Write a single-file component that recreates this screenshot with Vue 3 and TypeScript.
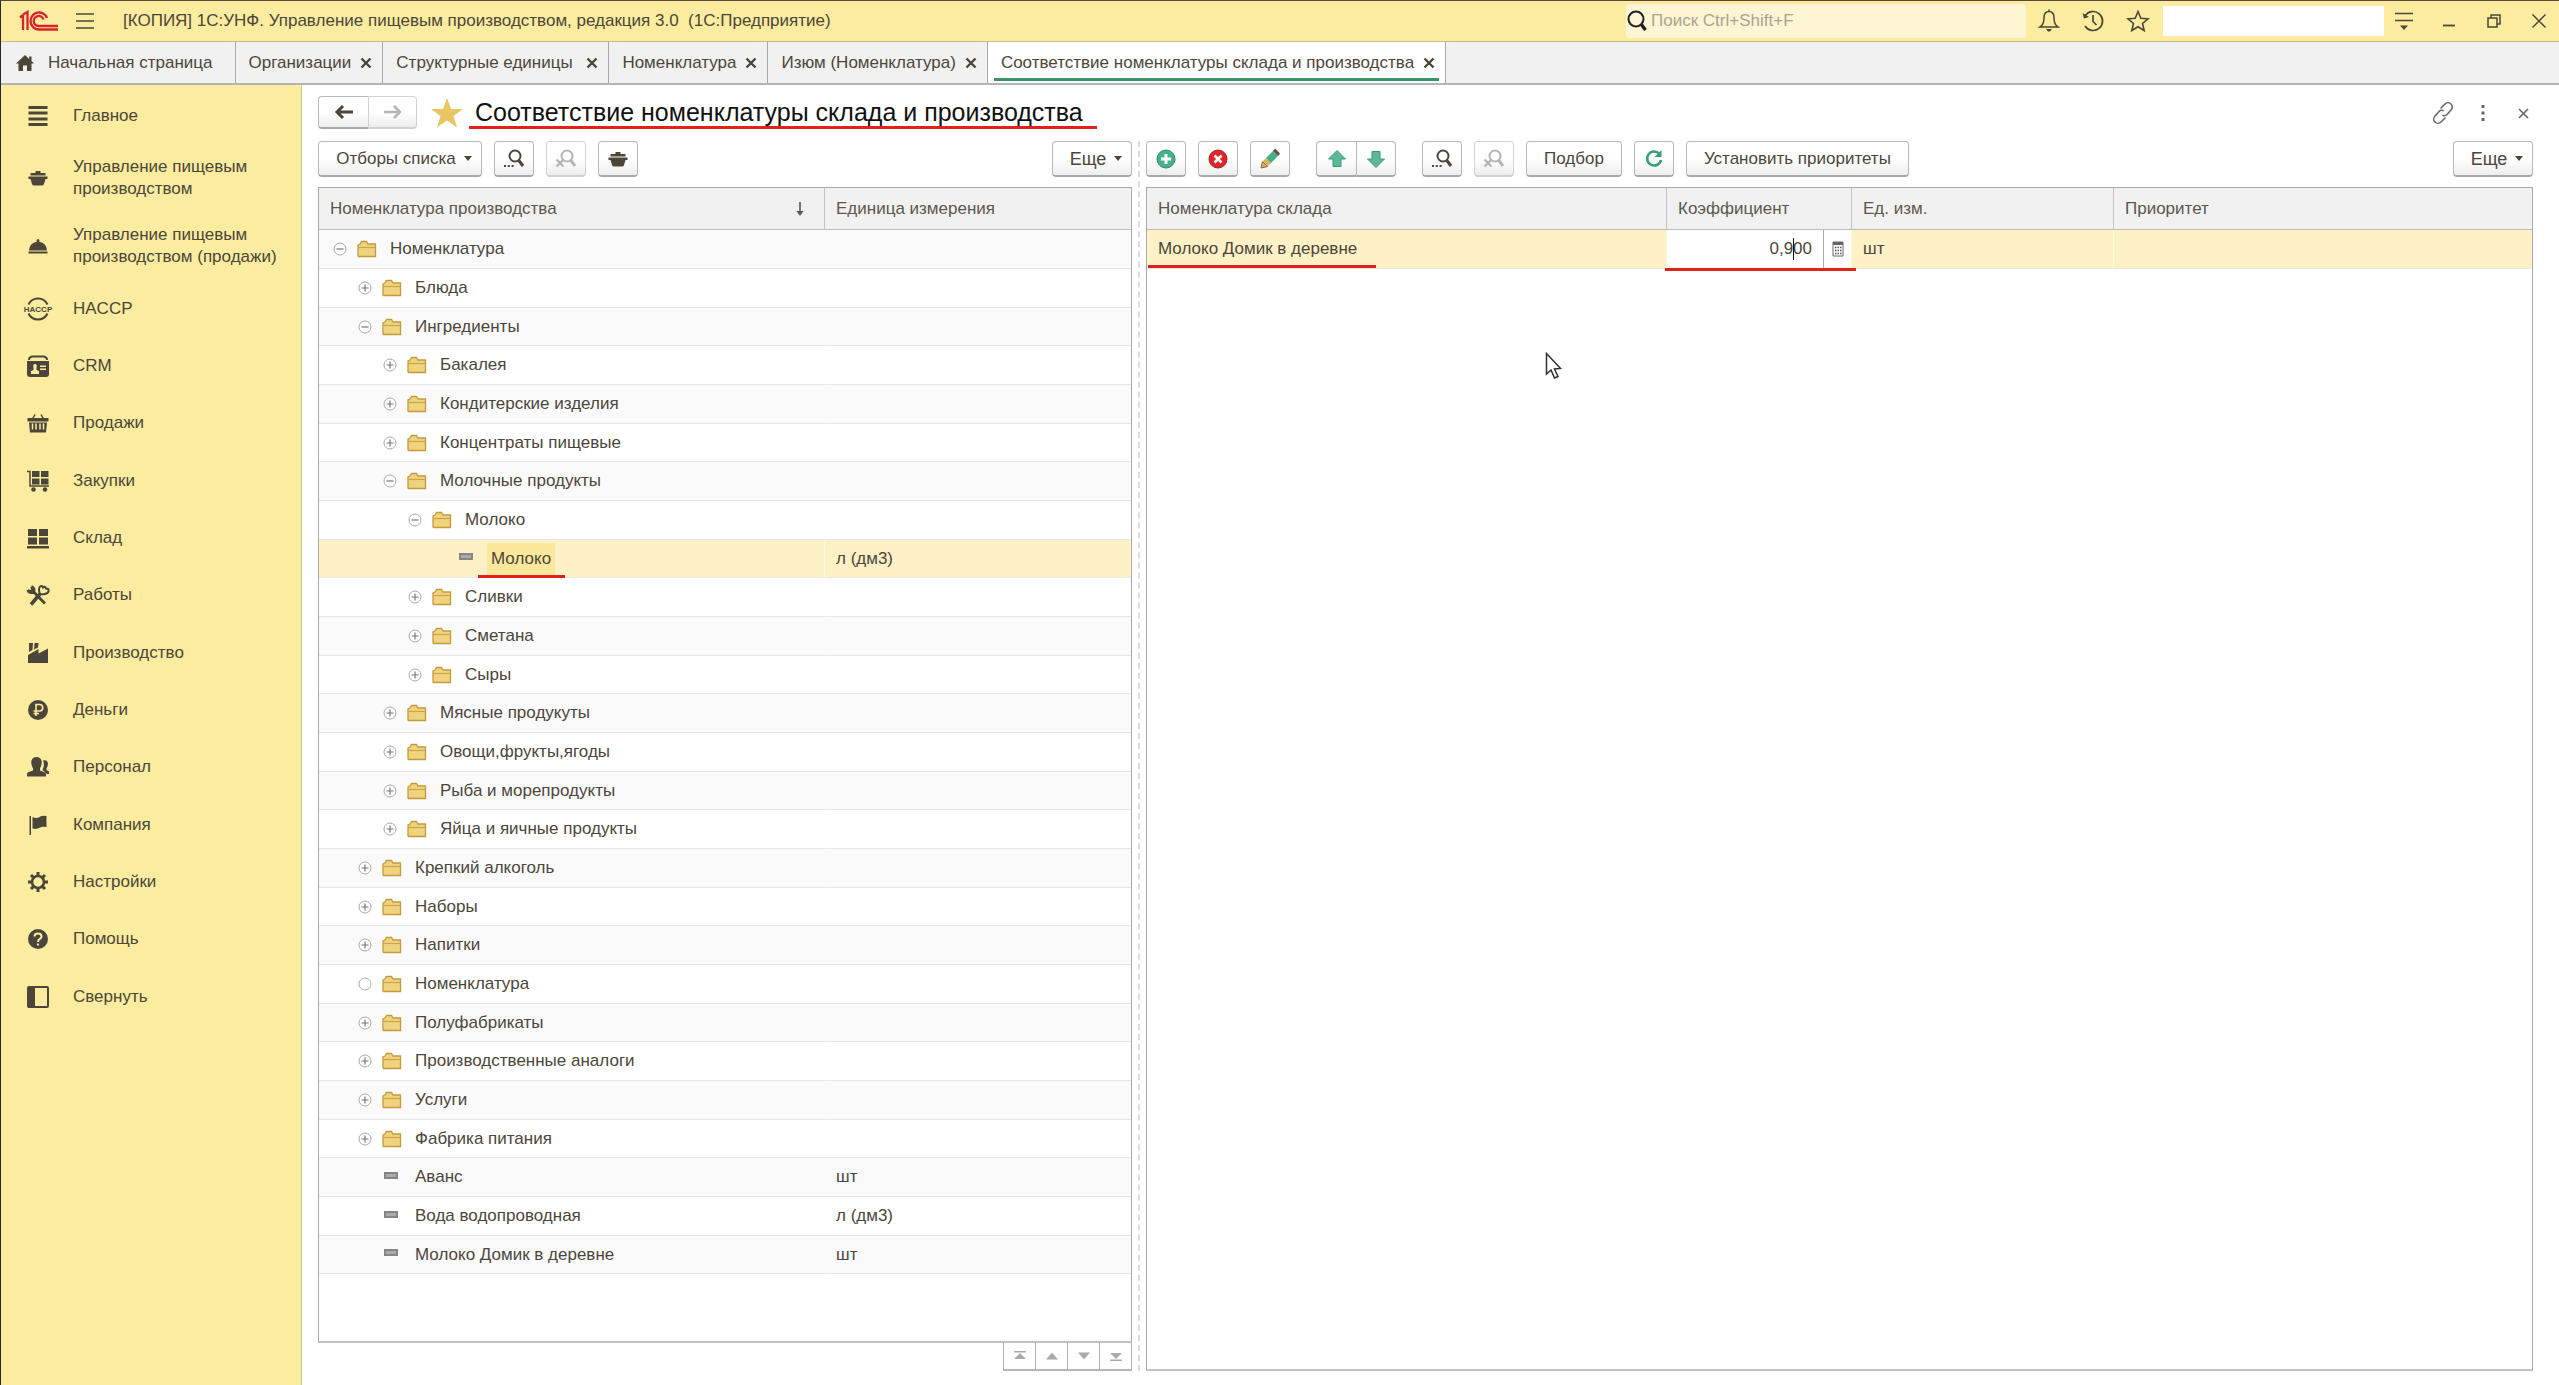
<script setup lang="ts">
import { ref } from 'vue'

interface Tab { title: string; closable: boolean; active?: boolean; home?: boolean }
interface NavItem { icon: string; label: string }
interface TreeRow { name: string; level: number; state: 'open' | 'closed' | 'empty' | 'leaf'; unit?: string; selected?: boolean }

const tabs: Tab[] = [
  { title: 'Начальная страница', closable: false, home: true },
  { title: 'Организации', closable: true },
  { title: 'Структурные единицы\u00a0', closable: true },
  { title: 'Номенклатура', closable: true },
  { title: 'Изюм (Номенклатура)', closable: true },
  { title: 'Соответствие номенклатуры склада и производства', closable: true, active: true },
]

const nav: NavItem[] = [
  { icon: 'main', label: 'Главное' },
  { icon: 'pot', label: 'Управление пищевым производством' },
  { icon: 'cloche', label: 'Управление пищевым производством (продажи)' },
  { icon: 'haccp', label: 'HACCP' },
  { icon: 'crm', label: 'CRM' },
  { icon: 'basket', label: 'Продажи' },
  { icon: 'cart', label: 'Закупки' },
  { icon: 'stock', label: 'Склад' },
  { icon: 'tools', label: 'Работы' },
  { icon: 'factory', label: 'Производство' },
  { icon: 'money', label: 'Деньги' },
  { icon: 'people', label: 'Персонал' },
  { icon: 'flag', label: 'Компания' },
  { icon: 'gear', label: 'Настройки' },
  { icon: 'help', label: 'Помощь' },
  { icon: 'collapse', label: 'Свернуть' },
]

const tree: TreeRow[] = [
  { name: 'Номенклатура', level: 0, state: 'open' },
  { name: 'Блюда', level: 1, state: 'closed' },
  { name: 'Ингредиенты', level: 1, state: 'open' },
  { name: 'Бакалея', level: 2, state: 'closed' },
  { name: 'Кондитерские изделия', level: 2, state: 'closed' },
  { name: 'Концентраты пищевые', level: 2, state: 'closed' },
  { name: 'Молочные продукты', level: 2, state: 'open' },
  { name: 'Молоко', level: 3, state: 'open' },
  { name: 'Молоко', level: 4, state: 'leaf', unit: 'л (дм3)', selected: true },
  { name: 'Сливки', level: 3, state: 'closed' },
  { name: 'Сметана', level: 3, state: 'closed' },
  { name: 'Сыры', level: 3, state: 'closed' },
  { name: 'Мясные продукуты', level: 2, state: 'closed' },
  { name: 'Овощи,фрукты,ягоды', level: 2, state: 'closed' },
  { name: 'Рыба и морепродукты', level: 2, state: 'closed' },
  { name: 'Яйца и яичные продукты', level: 2, state: 'closed' },
  { name: 'Крепкий алкоголь', level: 1, state: 'closed' },
  { name: 'Наборы', level: 1, state: 'closed' },
  { name: 'Напитки', level: 1, state: 'closed' },
  { name: 'Номенклатура', level: 1, state: 'empty' },
  { name: 'Полуфабрикаты', level: 1, state: 'closed' },
  { name: 'Производственные аналоги', level: 1, state: 'closed' },
  { name: 'Услуги', level: 1, state: 'closed' },
  { name: 'Фабрика питания', level: 1, state: 'closed' },
  { name: 'Аванс', level: 1, state: 'leaf', unit: 'шт' },
  { name: 'Вода водопроводная', level: 1, state: 'leaf', unit: 'л (дм3)' },
  { name: 'Молоко Домик в деревне', level: 1, state: 'leaf', unit: 'шт' },
]

const search = ref('')
const coefficient = ref('0,900')
</script>

<template>
  <svg class="sprite" aria-hidden="true">
    <symbol id="i-main" viewBox="0 0 24 24"><path d="M2.500 3.500h19M2.500 9h19M2.500 15h19M2.500 20.500h19" stroke="currentColor" stroke-width="3" fill="none" /></symbol>
    <symbol id="i-pot" viewBox="0 0 24 24"><path d="M9.500 5h5v2h5v2.500h-15V7h5zM2.500 10.500h19v2.500h-2l-1.500 5q-.5 1.500-2 1.500H8q-1.500 0-2-1.500L4.500 13h-2z" fill="currentColor" /></symbol>
    <symbol id="i-cloche" viewBox="0 0 24 24"><path d="M10.500 6.500a1.500 1.500 0 0 1 3 0l-.3 1.300Q20.500 9 21 16.500H3Q3.500 9 10.800 7.800zM2.500 17.500h19v2h-19z" fill="currentColor" /></symbol>
    <symbol id="i-crm" viewBox="0 0 24 24">
      <path d="M3 6q0-3.500 4-3.500h10Q21 2.500 21 6" stroke="currentColor" stroke-width="2" fill="none" />
      <path d="M1 7h22v13q0 3-3 3H4q-3 0-3-3z" fill="currentColor" />
      <path d="M5 20v-3l2.500-1V14Q6.500 10 9 10t1.500 4v2l2.500 1v3zM14 11.500h6v1.500h-6zM14 14.500h6V16h-6z" fill="#fbec9f" />
    </symbol>
    <symbol id="i-basket" viewBox="0 0 24 24">
      <path d="M6 9 9 3.500M18 9l-3-5.500" stroke="currentColor" stroke-width="1.500" />
      <path d="M1.500 7h21v3.500h-21zM3 11.500h18L20 21.500H4z" fill="currentColor" />
      <path d="M6.500 12.500v6M10 12.500v6M14 12.500v6M17.500 12.500v6" stroke="#fbec9f" stroke-width="1.500" />
    </symbol>
    <symbol id="i-cart" viewBox="0 0 24 24">
      <path d="M1 2.500h3V17h19" stroke="currentColor" stroke-width="1.500" fill="none" />
      <path d="M6 2h7.500v6H6zM15 2h7.500v6H15zM6 9.500h7.500v6H6zM15 9.500h7.500v6H15z" fill="currentColor" />
      <circle cx="7.500" cy="20.500" r="2.300" fill="currentColor" /><circle cx="19" cy="20.500" r="2.300" fill="currentColor" />
    </symbol>
    <symbol id="i-stock" viewBox="0 0 24 24"><path d="M2 3h9v7H2zM13 3h9v7h-9zM2 11.500h9v7H2zM13 11.500h9v7h-9zM1 20h22v2.500H1z" fill="currentColor" /></symbol>
    <symbol id="i-tools" viewBox="0 0 24 24">
      <path d="M5.500 3.500 7 6.500 5 8.500 1.800 7.500M1.800 7a4 4 0 0 0 6 2L19 20.500M7.800 9A4 4 0 0 0 5.500 3.500" stroke="currentColor" stroke-width="2.800" fill="none" />
      <path d="M5 21.500 14 11" stroke="currentColor" stroke-width="3.500" />
      <path d="M14 11q-2-5 0-7.500 2-1.500 3 1 2-2 3 1 3.500 0 2.500 3-1.500 3.500-8.500 2.500z" stroke="currentColor" stroke-width="2" fill="none" />
    </symbol>
    <symbol id="i-factory" viewBox="0 0 24 24"><path d="M3 2h4l-.5 7L3 11zM8.500 2h4L12 6.500 8 8.500zM2 14l10.500-6v4.500L22 7.500V22H2z" fill="currentColor" /></symbol>
    <symbol id="i-money" viewBox="0 0 24 24"><circle cx="12" cy="12" r="10" fill="currentColor" /><path d="M10 18V6.500h3.500a3.200 3.200 0 0 1 0 6.500H7.500M7.500 15.500H13" stroke="#fbec9f" stroke-width="1.600" fill="none" /></symbol>
    <symbol id="i-people" viewBox="0 0 24 24">
      <path d="M1 21.500v-2.500q0-1.500 2-2l4-1.500v-2Q4.500 9 5.500 5.500 6.500 2 10.500 2T15.500 5.500q1 3.500-1.500 8v2l4 1.500q2 .5 2 2v2.500z" fill="currentColor" />
      <path d="M17 5.500q4-1 4.800 2 .7 3-1.300 6v1.500l2.500 1.500v2.500h-2l-4.500-4q2.500-4.500.5-9.500z" fill="currentColor" />
    </symbol>
    <symbol id="i-flag" viewBox="0 0 24 24"><path d="M3.500 3H5v19H3.500zM6.500 4q4 2 7 0t7-1v11q-4-1-7 .8t-7 .7z" fill="currentColor" /></symbol>
    <symbol id="i-gear" viewBox="0 0 24 24">
      <circle cx="12" cy="12" r="6" stroke="currentColor" stroke-width="2.600" fill="none" />
      <path d="M12 2v4M12 18v4M2 12h4M18 12h4M5 5l2.800 2.800M16.200 16.200 19 19M5 19l2.800-2.800M16.200 7.800 19 5" stroke="currentColor" stroke-width="3" />
    </symbol>
    <symbol id="i-help" viewBox="0 0 24 24"><circle cx="12" cy="12" r="10" fill="currentColor" /><path d="M8.500 9.500Q8.500 6.500 12 6.500t3.500 3q0 1.500-2 2.700Q12 13 12 15M12 16.500v2" stroke="#fbec9f" stroke-width="2" fill="none" /></symbol>
    <symbol id="i-collapse" viewBox="0 0 24 24"><rect x="2" y="2" width="20" height="20" rx="1" stroke="currentColor" stroke-width="2" fill="none" /><path d="M2 2h7v20H2z" fill="currentColor" /></symbol>
    <symbol id="i-home" viewBox="0 0 20 18"><path d="M10 1 1 9.500h2.500V17h4.500v-5.500h4V17h4.500V9.500H19l-2.500-2.400V2.500h-2.300v2.400z" fill="currentColor" /></symbol>
    <symbol id="i-x" viewBox="0 0 12 12"><path d="m1.500 1.500 9 9m0-9-9 9" stroke="currentColor" stroke-width="2.400" /></symbol>
    <symbol id="i-find" viewBox="0 0 24 24">
      <circle cx="13" cy="9" r="5.500" stroke="currentColor" stroke-width="2" fill="none" /><path d="m16.500 13 4.500 6" stroke="currentColor" stroke-width="3" />
      <path d="M2 19h2M5.800 19h2M9.600 19h2" stroke="currentColor" stroke-width="2" />
    </symbol>
    <symbol id="i-unfind" viewBox="0 0 24 24">
      <circle cx="13" cy="9" r="5.500" stroke="currentColor" stroke-width="2" fill="none" /><path d="m16.500 13 4.500 6" stroke="currentColor" stroke-width="3" />
      <path d="m2.500 12.500 7 7m0-7-7 7" stroke="currentColor" stroke-width="2.400" />
    </symbol>
    <symbol id="i-folder" viewBox="0 0 20 18">
      <path d="M1 16V5l2-1 1.500-2.500h5L11 4h7.500v12.500h-17z" fill="#efd37f" stroke="#c39b3e" stroke-width="1.300" />
      <path d="M1 7.500h17.500" stroke="#c9a54c" stroke-width="1.200" />
    </symbol>
    <symbol id="i-open" viewBox="0 0 14 14"><circle cx="7" cy="7" r="6" fill="#fff" stroke="#aaa" /><path d="M3.500 7h7" stroke="#777" stroke-width="1.200" /></symbol>
    <symbol id="i-closed" viewBox="0 0 14 14"><circle cx="7" cy="7" r="6" fill="#fff" stroke="#aaa" /><path d="M3.500 7h7M7 3.500v7" stroke="#777" stroke-width="1.200" /></symbol>
    <symbol id="i-empty" viewBox="0 0 14 14"><circle cx="7" cy="7" r="6" fill="#fff" stroke="#aaa" /></symbol>
  </svg>

  <div class="app">
    <header class="titlebar">
      <svg class="logo" viewBox="0 0 40 22" fill="none" stroke="#d8232a" stroke-width="2.300" aria-label="1С">
        <path d="M1 7.500 4 5M4 5v15M4 4.500 8.500 2v18" />
        <path d="M28 8a8.500 8.500 0 1 0-8.500 11.500H39M24.500 9.500A5 5 0 1 0 19.500 16H39" />
      </svg>
      <button class="plain" aria-label="Меню"><svg width="20" height="18" viewBox="0 0 20 18"><path d="M1 2h18M1 9h18M1 16h18" stroke="currentColor" stroke-width="1.600" /></svg></button>
      <span class="app-title">[КОПИЯ] 1С:УНФ. Управление пищевым производством, редакция 3.0&nbsp; (1С:Предприятие)</span>
      <label class="search">
        <svg width="22" height="24" viewBox="0 0 22 24"><circle cx="10" cy="10" r="7.500" stroke="#222" stroke-width="2" fill="none" /><path d="m15 15 4.500 6" stroke="#222" stroke-width="3.500" /></svg>
        <input v-model="search" type="text" placeholder="Поиск Ctrl+Shift+F" aria-label="Поиск" />
      </label>
      <div class="sys">
        <button class="plain" aria-label="Уведомления"><svg width="22" height="24" viewBox="0 0 22 24" fill="none" stroke="currentColor" stroke-width="1.500"><path d="M2 18q4-2.500 4-9 0-6.500 5-6.500T16 9q0 6.500 4 9zM11 .5v2" /><path d="M8 20h6l-2 2.500h-2z" fill="currentColor" stroke="none" /></svg></button>
        <button class="plain" aria-label="История"><svg width="24" height="24" viewBox="0 0 24 24" fill="none" stroke="currentColor" stroke-width="1.700"><path d="M4 7a9.500 9.500 0 1 1 0 10M12 6v6.500l3.500 3.500" /><path d="M1.500 4 3 9.500 8 8z" fill="currentColor" stroke="none" /></svg></button>
        <button class="plain" aria-label="Избранное"><svg width="24" height="24" viewBox="0 0 24 24" fill="none" stroke="currentColor" stroke-width="1.600"><path d="m12 2.500 2.800 6.700 7.200.6-5.500 4.700 1.700 7L12 17.800l-6.200 3.700 1.700-7L2 9.800l7.200-.6z" /></svg></button>
      </div>
      <div class="user"></div>
      <div class="window">
        <button class="plain" aria-label="Сервис"><svg width="20" height="20" viewBox="0 0 20 20"><path d="M1 2.500h18M1 9.500h18" stroke="currentColor" stroke-width="1.600" /><path d="M6 14.500h8L10 19z" fill="currentColor" /></svg></button>
        <button class="plain" aria-label="Свернуть окно"><svg width="20" height="20" viewBox="0 0 20 20"><path d="M4 14.500h12" stroke="currentColor" stroke-width="1.800" /></svg></button>
        <button class="plain" aria-label="Восстановить окно"><svg width="20" height="20" viewBox="0 0 20 20" fill="none" stroke="currentColor" stroke-width="1.500"><path d="M4 7h9v9H4zM7 7V4h9v9h-3" /></svg></button>
        <button class="plain" aria-label="Закрыть окно"><svg width="20" height="20" viewBox="0 0 20 20"><path d="m3.500 3.500 13 13m0-13-13 13" stroke="currentColor" stroke-width="1.500" /></svg></button>
      </div>
    </header>

    <nav class="tabs" aria-label="Открытые окна">
      <div v-for="t in tabs" :key="t.title" class="tab" :class="{ active: t.active, home: t.home }">
        <svg v-if="t.home" width="20" height="18"><use href="#i-home" /></svg>
        <a href="#">{{ t.title }}</a>
        <button v-if="t.closable" class="plain" aria-label="Закрыть вкладку"><svg width="12" height="12"><use href="#i-x" /></svg></button>
      </div>
    </nav>

    <div class="body">
      <nav class="side" aria-label="Разделы">
        <a v-for="n in nav" :key="n.label" href="#">
          <svg v-if="n.icon === 'haccp'" width="30" height="24" viewBox="0 0 30 24">
            <path d="M5.500 7.500a10.500 10.500 0 0 1 19 0M5.500 16.500a10.500 10.500 0 0 0 19 0" stroke="currentColor" stroke-width="2" fill="none" />
            <text x="15" y="15" text-anchor="middle" font-size="8" font-weight="700" fill="currentColor">HACCP</text>
          </svg>
          <svg v-else width="30" height="24"><use :href="'#i-' + n.icon" /></svg>
          <span>{{ n.label }}</span>
        </a>
      </nav>

      <main>
        <div class="heading">
          <div class="pair">
            <button class="btn" aria-label="Назад"><svg width="20" height="16" viewBox="0 0 20 16"><path d="M19 8H4M9 2 3 8l6 6" stroke="currentColor" stroke-width="3" fill="none" /></svg></button>
            <button class="btn dim" aria-label="Вперед"><svg width="20" height="16" viewBox="0 0 20 16"><path d="M1 8h15M11 2l6 6-6 6" stroke="currentColor" stroke-width="2.500" fill="none" /></svg></button>
          </div>
          <svg class="fav" width="32" height="30" viewBox="0 0 32 30"><path d="m16 0 4 11h12l-9.500 7L26 29.500 16 22.500 6 29.500 9.500 18 0 11h12z" fill="#e9c565" /></svg>
          <h1>Соответствие номенклатуры склада и производства</h1>
          <div class="form-tools">
            <button class="plain" aria-label="Ссылка"><svg width="24" height="24" viewBox="0 0 24 24" fill="none" stroke="currentColor" stroke-width="1.600" stroke-linecap="round"><path d="m10 7 4-4a4.200 4.200 0 0 1 6 6l-4 4.500a4 4 0 0 1-4 1M14 17l-4 4a4.200 4.200 0 0 1-6-6l4-4.500a4 4 0 0 1 4-1" /></svg></button>
            <button class="plain" aria-label="Действия"><svg width="24" height="24" viewBox="0 0 24 24" fill="currentColor"><path d="M10.500 4h3v3h-3zM10.500 10.500h3v3h-3zM10.500 17h3v3h-3z" /></svg></button>
            <button class="plain" aria-label="Закрыть"><svg width="24" height="24" viewBox="0 0 24 24"><path d="m8 8 9 9m0-9-9 9" stroke="currentColor" stroke-width="1.600" /></svg></button>
          </div>
        </div>

        <div class="panes">
          <section class="pane">
            <div class="toolbar">
              <button class="btn wide">Отборы списка <i class="caret"></i></button>
              <button class="btn icon" aria-label="Найти"><svg width="24" height="24"><use href="#i-find" /></svg></button>
              <button class="btn icon dim" aria-label="Отменить поиск"><svg width="24" height="24"><use href="#i-unfind" /></svg></button>
              <button class="btn icon" aria-label="Производство"><svg width="24" height="24"><use href="#i-pot" /></svg></button>
              <button class="btn more">Еще <i class="caret"></i></button>
            </div>
            <div class="grid">
              <table>
                <colgroup><col /><col class="unit" /></colgroup>
                <thead>
                  <tr>
                    <th><div class="sorted">Номенклатура производства <svg width="10" height="16" viewBox="0 0 10 16"><path d="M5 1v12" stroke="currentColor" stroke-width="1.600" /><path d="M1.500 10h7L5 15z" fill="currentColor" /></svg></div></th>
                    <th>Единица измерения</th>
                  </tr>
                </thead>
                <tbody>
                  <tr v-for="(r, i) in tree" :key="i" :class="{ selected: r.selected }">
                    <td>
                      <div class="node" :style="{ paddingLeft: r.level * 25 + 'px' }">
                        <svg v-if="r.state !== 'leaf'" width="14" height="14" class="toggle"><use :href="'#i-' + r.state" /></svg>
                        <span v-else class="toggle"></span>
                        <svg v-if="r.state !== 'leaf'" width="20" height="18"><use href="#i-folder" /></svg>
                        <span v-else class="dash"></span>
                        <span class="name">{{ r.name }}</span>
                      </div>
                    </td>
                    <td>{{ r.unit }}</td>
                  </tr>
                </tbody>
              </table>
            </div>
            <div class="pager">
              <button aria-label="В начало"><svg width="14" height="12" viewBox="0 0 14 12"><path d="M1 1h12v1.500H1zM7 3l6 6H1z" fill="#aaa" /></svg></button>
              <button aria-label="Вверх"><svg width="14" height="12" viewBox="0 0 14 12"><path d="m7 2.500 6 7H1z" fill="#aaa" /></svg></button>
              <button aria-label="Вниз"><svg width="14" height="12" viewBox="0 0 14 12"><path d="m7 9.500 6-7H1z" fill="#aaa" /></svg></button>
              <button aria-label="В конец"><svg width="14" height="12" viewBox="0 0 14 12"><path d="M1 9.500h12V11H1zM7 9l6-6H1z" fill="#aaa" /></svg></button>
            </div>
          </section>

          <div class="splitter"></div>

          <section class="pane">
            <div class="toolbar">
              <button class="btn icon" aria-label="Добавить"><svg width="24" height="24" viewBox="0 0 24 24"><circle cx="12" cy="12" r="9" fill="#49b08c" stroke="#2d8a66" /><path d="M12 7v10M7 12h10" stroke="#fff" stroke-width="3" /></svg></button>
              <button class="btn icon" aria-label="Удалить"><svg width="24" height="24" viewBox="0 0 24 24"><circle cx="12" cy="12" r="9" fill="#e3222a" stroke="#8d2a2a" /><path d="m8.500 8.500 7 7m0-7-7 7" stroke="#fff" stroke-width="2.600" /></svg></button>
              <button class="btn icon" aria-label="Изменить"><svg width="24" height="24" viewBox="0 0 24 24"><path d="m3 21 1.500-6.500 5 5z" fill="#d8b060" stroke="#7d6a3c" /><path d="m5 14 3-3 5 5-3.500 3.500z" fill="#d9b25c" /><path d="m8 11 7-7 5 5-7 7z" fill="#43b08a" /><path d="m15 4 2-2.500 5 5L20 9z" fill="#5a5245" /></svg></button>
              <div class="pair spaced">
                <button class="btn icon" aria-label="Переместить вверх"><svg width="24" height="24" viewBox="0 0 24 24"><path d="m12 3.500 8.500 8.500H16v7.500H8V12H3.500z" fill="#5bb995" stroke="#3c9a76" /></svg></button>
                <button class="btn icon" aria-label="Переместить вниз"><svg width="24" height="24" viewBox="0 0 24 24"><path d="m12 20.500 8.500-8.500H16V4.500H8V12H3.500z" fill="#5bb995" stroke="#3c9a76" /></svg></button>
              </div>
              <button class="btn icon" aria-label="Найти"><svg width="24" height="24"><use href="#i-find" /></svg></button>
              <button class="btn icon dim" aria-label="Отменить поиск"><svg width="24" height="24"><use href="#i-unfind" /></svg></button>
              <button class="btn text">Подбор</button>
              <button class="btn icon" aria-label="Обновить"><svg width="24" height="24" viewBox="0 0 24 24"><path d="M17.500 7a7 7 0 1 0 1.500 6" stroke="#35a072" stroke-width="2.600" fill="none" /><path d="M19.500 3v7h-7z" fill="#35a072" /></svg></button>
              <button class="btn text">Установить приоритеты</button>
              <button class="btn more">Еще <i class="caret"></i></button>
            </div>
            <div class="grid">
              <table>
                <colgroup><col /><col class="coef" /><col class="measure" /><col class="priority" /></colgroup>
                <thead>
                  <tr><th>Номенклатура склада</th><th>Коэффициент</th><th>Ед. изм.</th><th>Приоритет</th></tr>
                </thead>
                <tbody>
                  <tr class="selected">
                    <td class="marked">Молоко Домик в деревне</td>
                    <td class="editing">
                      <div class="editor">
                        <input v-model="coefficient" type="text" aria-label="Коэффициент" />
                        <button class="calc" aria-label="Калькулятор"><svg width="12" height="16" viewBox="0 0 12 16"><path d="M1 1h10v14H1z" fill="#fff" stroke="#666" /><path d="M1 1h10v3H1z" fill="#666" /><path d="M3 6.500h7M3 9.500h7M3 12.500h7" stroke="#555" stroke-width="1.600" stroke-dasharray="1.500 1" /></svg></button>
                        <span class="text-caret"></span>
                      </div>
                    </td>
                    <td>шт</td>
                    <td></td>
                  </tr>
                </tbody>
              </table>
              <svg class="cursor" width="18" height="28" viewBox="0 0 18 28"><path d="M1.500 1.500v20.500l4.500-4 3.500 8 3.500-1.500-3.500-7.500 6-.5z" fill="#fff" stroke="#333" stroke-width="1.500" /></svg>
            </div>
          </section>
        </div>
      </main>
    </div>
  </div>
</template>

<style>
body { margin: 0; background: #fff; }
</style>

<style scoped>
* { box-sizing: border-box; }
.sprite { position: absolute; width: 0; height: 0; }
.app { min-height: 100vh; display: flex; flex-direction: column; border-top: 1px solid #54483f; border-left: 1px solid #2c2820; font: 17px/22px "Liberation Sans", Arial, sans-serif; color: #4c463a; }
button, input { font: inherit; color: inherit; }
button { padding: 0; }
svg { flex: none; display: block; }
a { color: inherit; text-decoration: none; }
.plain { border: 0; background: none; display: flex; align-items: center; justify-content: center; }

.titlebar { height: 41px; background: #fbec9f; border-bottom: 1px solid #c9bd80; display: flex; align-items: center; }
.logo { width: 40px; height: 22px; margin: 0 16px 0 18px; }
.app-title { margin-left: 28px; white-space: nowrap; }
.search { margin-left: auto; width: 400px; height: 34px; background: #fdf5d3; display: flex; align-items: center; border-radius: 3px; }
.search input { flex: 1; min-width: 0; border: 0; background: none; outline: 0; padding: 0 3px; }
.search input::placeholder { color: #a9a491; opacity: 1; }
.sys { display: flex; gap: 21px; margin: 0 13px 0 12px; }
.user { width: 221px; height: 30px; background: #fff; }
.window { display: flex; gap: 25px; margin: 0 10px; }

.tabs { height: 43px; background: #f1f1f1; border-bottom: 2px solid #b4b4b4; display: flex; }
.tab { display: flex; align-items: center; gap: 9px; padding: 0 10px 0 13px; border-right: 1px solid #a9a9a9; white-space: nowrap; position: relative; }
.tab.home { padding: 0 22px 0 14px; gap: 13px; }
.tab.active { background: #fff; }
.tab.active::after { content: ""; position: absolute; left: 6px; right: 6px; bottom: 2px; height: 3px; background: #3d9468; }

.body { flex: 1; display: flex; }
.side { width: 301px; flex: none; background: #fbec9f; border-right: 1px solid #d3c68a; padding-top: 2px; }
.side a { display: flex; align-items: center; min-height: 57px; padding: 12px 14px 12px 22px; gap: 20px; }
.side a:nth-child(3n) { min-height: 58px; }

main { flex: 1; min-width: 0; padding: 11px 26px 14px 16px; display: flex; flex-direction: column; }
.heading { display: flex; align-items: center; height: 33px; margin-bottom: 12px; }
.pair { display: flex; }
.pair .btn { width: 50px; height: 33px; }
.pair .btn:first-child { border-radius: 4px 0 0 4px; border-right: 0; }
.pair .btn:last-child { border-radius: 0 4px 4px 0; width: 49px; }
.fav { margin: 0 6px 0 14px; }
h1 { margin: 0; font-size: 25px; line-height: 28px; height: 33px; padding: 2px 14px 0 6px; font-weight: 400; color: #111; border-bottom: 3px solid #e3211c; white-space: nowrap; }
.form-tools { margin-left: auto; display: flex; gap: 16px; margin-right: -2px; color: #666; }

.panes { flex: 1; display: grid; grid-template-columns: 814fr 14px 1387fr; }
.splitter { justify-self: center; border-left: 2px dashed #dcdcdc; }
.pane { min-width: 0; display: flex; flex-direction: column; }
.toolbar { display: flex; gap: 12px; margin-bottom: 10px; }
.btn { height: 36px; border: 1px solid #b9b9b9; border-bottom: 2px solid #a8a8a8; border-radius: 4px; background: linear-gradient(#fff 50%, #ededed); display: flex; align-items: center; justify-content: center; white-space: nowrap; }
.btn.icon, .pair.spaced .btn { width: 40px; height: 36px; }
.btn.wide { width: 164px; gap: 8px; padding-left: 8px; }
.btn.more { width: 80px; gap: 8px; margin-left: auto; padding-left: 8px; font-size: 18px; }
.btn.text { padding: 0 17px; }
.dim { color: #b5b5b5; border-color: #d2d2d2; }
.caret { border: 4px solid transparent; border-top: 5px solid currentColor; border-bottom: 0; }
.spaced { margin: 0 14px; }

.grid { flex: 1; border: 1px solid #a8a8a8; border-bottom: 2px solid #c2c2c2; position: relative; }
table { width: 100%; table-layout: fixed; border-collapse: separate; border-spacing: 0; }
.unit { width: 307px; }
.coef { width: 185px; }
.measure { width: 262px; }
.priority { width: 419px; }
th { height: 42px; padding: 0 11px; background: #f1f1f1; border-bottom: 1px solid #bdbdbd; font-weight: 400; text-align: left; color: #5c574c; }
th + th { border-left: 1px solid #c4c4c4; }
.sorted { display: flex; align-items: center; justify-content: space-between; padding-right: 8px; }
td { height: 39px; padding: 0 11px; border-bottom: 1px solid #e6e6e6; white-space: nowrap; }
td + td { border-left: 1px solid transparent; }
tbody tr:nth-child(3n) td { height: 38px; }
tbody tr:nth-child(odd) { background: #fafafa; }
tbody tr.selected { background: #fdf1c5; }
.selected td + td { border-left-color: #fff8e0; }
.node { display: flex; align-items: center; }
.toggle { width: 14px; margin: 0 10px 0 3px; flex: none; }
.node svg:nth-child(2) { margin-right: 13px; }
.dash { width: 14px; height: 7px; margin: 0 17px 4px 2px; background: #aaa; border: 2px solid #858585; }
.selected .name { position: relative; background: #fbe89a; padding: 5px 4px; margin: 0 -3px; }
.selected .name::after { content: ""; position: absolute; left: -9px; right: -10px; bottom: -3px; height: 3px; background: #e3211c; }
.pager { display: flex; justify-content: flex-end; }
.pager button { width: 32px; height: 28px; background: #fff; border: 1px solid #b5b5b5; border-top: 0; border-right: 0; border-bottom-width: 2px; display: flex; align-items: center; justify-content: center; }
.pager button:last-child { width: 33px; border-right: 1px solid #b5b5b5; }

.marked { position: relative; }
.marked::after { content: ""; position: absolute; left: 1px; width: 228px; bottom: 0; height: 3px; background: #e3211c; }
.editing { position: relative; padding: 0; background: #fff; }
.editing::after { content: ""; position: absolute; left: -2px; right: -5px; bottom: -3px; height: 3px; background: #e3211c; z-index: 1; }
.editor { display: flex; height: 38px; position: relative; }
.editor input { flex: 1; min-width: 0; border: 0; background: #fff; text-align: right; padding: 0 11px 0 0; outline: 0; }
.calc { width: 28px; border: 0; border-left: 1px solid #aaa; background: #fff; display: flex; align-items: center; justify-content: center; }
.text-caret { position: absolute; right: 57px; top: 8px; width: 1px; height: 22px; background: #111; }
.cursor { position: absolute; left: 398px; top: 164px; }
</style>
